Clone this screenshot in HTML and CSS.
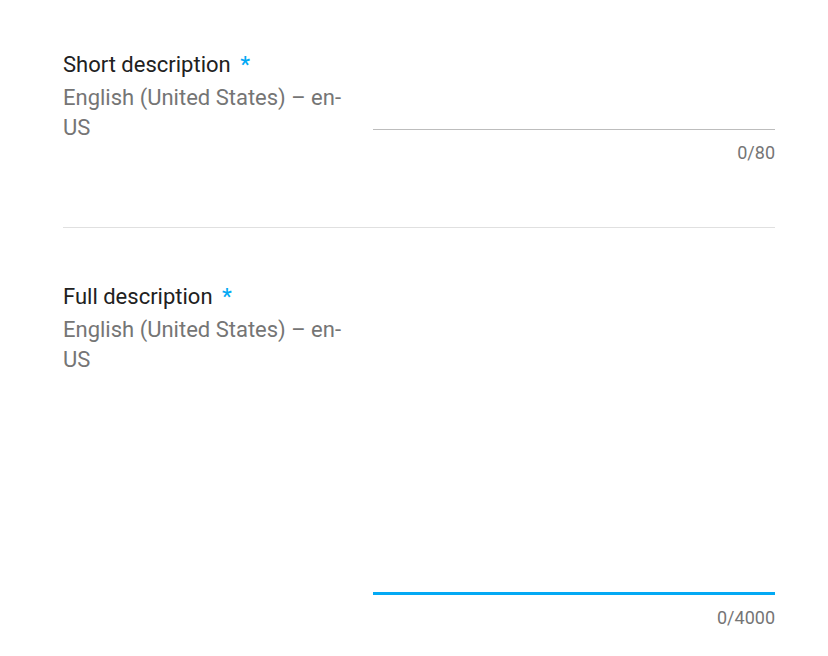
FILE: index.html
```html
<!DOCTYPE html>
<html>
<head>
<meta charset="utf-8">
<link rel="stylesheet" href="styles.css">
</head>
<body>
<div class="page">
  <section class="field field-first">
    <div class="meta">
      <div class="label">Short description <span class="req">*</span></div>
      <div class="lang">English (United States) – en-US</div>
    </div>
    <div class="control">
      <div class="input short"></div>
      <div class="counter">0/80</div>
    </div>
  </section>
  <div class="divider"></div>
  <section class="field field-second">
    <div class="meta">
      <div class="label">Full description <span class="req">*</span></div>
      <div class="lang">English (United States) – en-US</div>
    </div>
    <div class="control">
      <div class="input long"></div>
      <div class="counter">0/4000</div>
    </div>
  </section>
</div>
</body>
</html>
```
FILE: styles.css
```css
html, body {
  margin: 0;
  padding: 0;
  background: #ffffff;
}
body {
  font-family: Roboto, "Noto Sans", sans-serif;
}
.page {
  padding: 0 53px 0 63px;
}
.field {
  display: flex;
  gap: 20px;
}
.field-first {
  padding-top: 50px;
  padding-bottom: 64px;
}
.field-second {
  padding-top: 54px;
}
.meta {
  width: 290px;
  flex: none;
}
.label {
  font-size: 22px;
  line-height: 30px;
  color: #212121;
}
.req {
  color: #03a9f4;
  margin-left: 4px;
  font-weight: 500;
}
.lang {
  font-size: 22px;
  line-height: 30px;
  color: #757575;
  margin-top: 3px;
}
.control {
  flex: 1;
  display: flex;
  flex-direction: column;
}
.input.short {
  height: 79px;
  border-bottom: 1px solid #bdbdbd;
}
.input.long {
  height: 310px;
  border-bottom: 3px solid #03a9f4;
}
.counter {
  margin-top: 13px;
  text-align: right;
  font-size: 18px;
  line-height: 20px;
  color: #757575;
}
.divider {
  height: 1px;
  background: #e0e0e0;
}
```
